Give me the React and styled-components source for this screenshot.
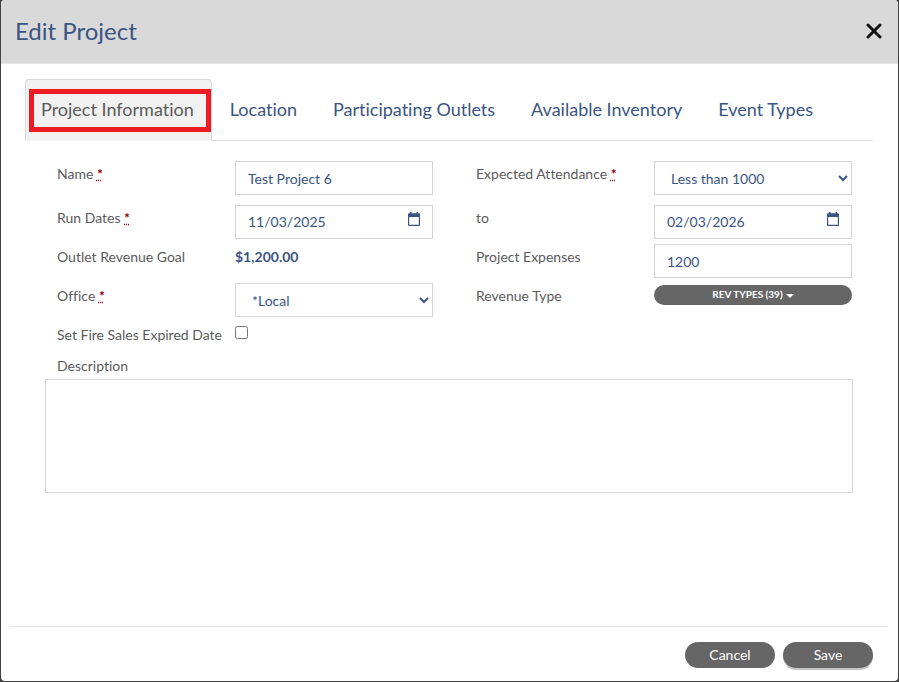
import React, { useState } from 'react'
import styled, { createGlobalStyle } from 'styled-components'

const GlobalStyle = createGlobalStyle`
* {
    box-sizing: border-box;
}

body {
    margin: 0;
    background-color: #414141;
    font-family: Lato, "Liberation Sans", sans-serif;
    font-size: 14px;
    font-variant-ligatures: none;
    color: #5b5b5b;
}

button, input, select, textarea {
    font-family: inherit;
    font-size: 14px;
}
`

const Modal = styled.div`
display: flex;
flex-direction: column;
min-height: calc(100vh - 1px);
margin: 0 1px 1px;
background-color: white;
border-radius: 4px;
overflow: hidden;
`

const Header = styled.header`
display: flex;
justify-content: space-between;
align-items: center;
height: 64px;
padding: 0 15px 2px 14px;
background-color: #d9d9d9;
border-bottom: 1px solid #e5e5e5;
`

const Title = styled.h1`
margin: 0;
font-size: 24px;
font-weight: 400;
line-height: 32px;
color: #3a5583;
`

const CloseButton = styled.button`
display: flex;
padding: 0;
border: none;
background-color: transparent;
color: #111;
cursor: pointer;
`

const Body = styled.div`
flex: 1;
padding: 15px 25px 15px 24px;
`

const Tabs = styled.nav`
display: flex;
gap: 2px;
border-bottom: 1px solid #d9d9d9;
`

const Tab = styled.a`
position: relative;
margin-bottom: -1px;
padding: 0 17px 2px 15px;
border: 1px solid ${(props) => (props.$active ? '#d9d9d9' : 'transparent')};
border-bottom: ${(props) => (props.$active ? '1px solid #f1f1f1' : '1px solid transparent')};
border-radius: 4px 4px 0 0;
background-color: ${(props) => (props.$active ? '#f1f1f1' : 'transparent')};
color: ${(props) => (props.$active ? '#5b5b5b' : '#3a5583')};
font-size: 18px;
line-height: 58px;
white-space: nowrap;
text-decoration: none;
`

const Highlight = styled.span`
position: absolute;
top: 9px;
bottom: 8px;
left: 3px;
right: 0;
border: 5px solid #ed1c24;
pointer-events: none;
`

const Form = styled.form`
padding: 20px;
`

const Row = styled.div`
display: grid;
grid-template-columns: 1fr 1fr;
column-gap: 43px;
min-height: ${(props) => (props.$tall ? '44px' : '39px')};
padding: 0 1px 0 12px;
`

const Field = styled.div`
display: grid;
grid-template-columns: 178px 1fr;
align-items: start;
`

const Label = styled.label`
line-height: 26px;
white-space: nowrap;
`

const Required = styled.abbr`
color: #8b0000;
font-weight: 700;
`

const Input = styled.input`
width: 100%;
height: 34px;
padding: 0 12px;
border: 1px solid #d5d5d5;
border-radius: 0;
background-color: white;
color: #3a5583;
`

const DateInput = styled(Input)`
padding-bottom: 2px;

&::-webkit-datetime-edit-month-field,
&::-webkit-datetime-edit-day-field,
&::-webkit-datetime-edit-year-field {
    padding: 0;
}

&::-webkit-calendar-picker-indicator {
    margin: 0;
    padding: 0;
    opacity: 0;
}
`

const DateBox = styled.div`
position: relative;

svg {
    position: absolute;
    top: 7px;
    right: 13px;
    pointer-events: none;
}
`

const Select = styled.select`
width: 100%;
height: 34px;
padding: 0 0 0 12px;
border: 1px solid #d5d5d5;
border-radius: 0;
background-color: white;
color: #3a5583;
`

const Checkbox = styled.input`
width: 13px;
height: 13px;
margin: 4px 0 0;
`

const Goal = styled.strong`
line-height: 26px;
color: #3a5583;
`

const DropButton = styled.button`
display: flex;
justify-content: center;
align-items: center;
gap: 3px;
height: 20px;
margin-top: 2px;
padding: 0 6px 2px;
border: none;
border-radius: 10px;
background-color: #666;
color: white;
font-size: 10px;
font-weight: 700;
cursor: pointer;

svg {
    margin-top: 3px;
}
`

const DescriptionLabel = styled.label`
display: block;
margin-top: -8px;
padding-left: 12px;
line-height: 26px;
`

const Description = styled.textarea`
display: block;
width: 100%;
height: 114px;
padding: 6px 12px;
border: 1px solid #d5d5d5;
color: #3a5583;
resize: none;
`

const Footer = styled.footer`
display: flex;
justify-content: flex-end;
gap: 8px;
margin: 0 10px 0 9px;
padding: 15px 15px 13px;
border-top: 1px solid #e5e5e5;
`

const PillButton = styled.button`
width: 90px;
height: 26px;
padding: 0 0 2px;
border: none;
border-radius: 13px;
background-color: #666;
color: white;
box-shadow: ${(props) => (props.$raised ? '0 2px 0 #c4c4c4' : 'none')};
cursor: pointer;
`

const tabs = ['Project Information', 'Location', 'Participating Outlets', 'Available Inventory', 'Event Types']

function CalendarIcon() {
    return (
        <svg width="12" height="14" viewBox="0 0 12 14" fill="#3a5583" aria-hidden="true">
            <path d="M2 0h1.500v1.300h5V0H10v1.300h.7c.7 0 1.300.5 1.300 1.200v10.200c0 .7-.6 1.300-1.300 1.300H1.300C.6 14 0 13.400 0 12.700V2.500C0 1.800.6 1.300 1.300 1.300H2zM1.200 5v7.800h9.600V5z" />
        </svg>
    )
}

function DateField({ id, value }) {
    return (
        <DateBox>
            <DateInput id={id} type="date" defaultValue={value} />
            <CalendarIcon />
        </DateBox>
    )
}

export default function App() {
    const [active, setActive] = useState(0)

    const handleTab = (e, index) => {
        e.preventDefault()
        setActive(index)
    }

    return (<>
        <GlobalStyle />
        <Modal role="dialog" aria-labelledby="title">
            <Header>
                <Title id="title">Edit Project</Title>
                <CloseButton type="button" aria-label="Close">
                    <svg width="18" height="16" viewBox="0 0 18 16" stroke="currentColor" strokeWidth="3" strokeLinecap="round">
                        <path d="M3 2L15 14M15 2L3 14" />
                    </svg>
                </CloseButton>
            </Header>

            <Body>
                <Tabs>
                    {tabs.map((tab, index) => (
                        <Tab key={tab} href="#" $active={index === active} onClick={(e) => handleTab(e, index)}>
                            {tab}
                            {index === 0 && <Highlight />}
                        </Tab>
                    ))}
                </Tabs>

                <Form>
                    <Row $tall>
                        <Field>
                            <Label htmlFor="name">Name <Required title="required">*</Required></Label>
                            <Input id="name" type="text" defaultValue="Test Project 6" />
                        </Field>
                        <Field>
                            <Label htmlFor="attendance">Expected Attendance <Required title="required">*</Required></Label>
                            <Select id="attendance">
                                <option>Less than 1000</option>
                            </Select>
                        </Field>
                    </Row>
                    <Row>
                        <Field>
                            <Label htmlFor="start">Run Dates <Required title="required">*</Required></Label>
                            <DateField id="start" value="2025-11-03" />
                        </Field>
                        <Field>
                            <Label htmlFor="end">to</Label>
                            <DateField id="end" value="2026-02-03" />
                        </Field>
                    </Row>
                    <Row>
                        <Field>
                            <Label as="span">Outlet Revenue Goal</Label>
                            <Goal>$1,200.00</Goal>
                        </Field>
                        <Field>
                            <Label htmlFor="expenses">Project Expenses</Label>
                            <Input id="expenses" type="text" defaultValue="1200" />
                        </Field>
                    </Row>
                    <Row>
                        <Field>
                            <Label htmlFor="office">Office <Required title="required">*</Required></Label>
                            <Select id="office">
                                <option>*Local</option>
                            </Select>
                        </Field>
                        <Field>
                            <Label htmlFor="revenue">Revenue Type</Label>
                            <DropButton id="revenue" type="button">
                                REV TYPES (39)
                                <svg width="8" height="4" viewBox="0 0 8 4" fill="currentColor" aria-hidden="true">
                                    <path d="M0 0h8L4 4z" />
                                </svg>
                            </DropButton>
                        </Field>
                    </Row>
                    <Row>
                        <Field>
                            <Label htmlFor="expired">Set Fire Sales Expired Date</Label>
                            <Checkbox id="expired" type="checkbox" />
                        </Field>
                    </Row>
                    <DescriptionLabel htmlFor="description">Description</DescriptionLabel>
                    <Description id="description" />
                </Form>
            </Body>

            <Footer>
                <PillButton type="button">Cancel</PillButton>
                <PillButton type="button" $raised>Save</PillButton>
            </Footer>
        </Modal>
    </>
    )
}
